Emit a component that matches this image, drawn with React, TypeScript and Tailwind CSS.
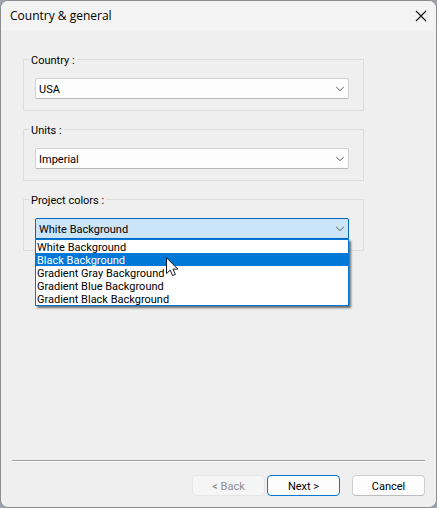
import { useState } from 'react'
import type { ReactNode } from 'react'
import clsx from 'clsx'

const colorOptions = [
  'White Background',
  'Black Background',
  'Gradient Gray Background',
  'Gradient Blue Background',
  'Gradient Black Background',
]

type ComboProps = {
  id: string
  value: string
  options: string[]
  open?: boolean
  onChange: (value: string) => void
}

function Combo({ id, value, options, open, onChange }: ComboProps) {
  return (
    <div className="relative flex">
      <select
        id={id}
        value={value}
        onChange={(e) => onChange(e.target.value)}
        className={clsx(
          'h-[21px] w-full appearance-none border pl-[3px] pr-6 pt-[3px] outline-none',
          open
            ? 'rounded-t-[2px] border-[#0067c0] bg-[#cce4f7]'
            : 'rounded-[2px] border-[#d0d0d0] border-b-[#b8b8b8] bg-[#fdfdfd]'
        )}
      >
        {options.map((option) => (
          <option key={option}>{option}</option>
        ))}
      </select>
      <svg
        className="pointer-events-none absolute right-1 top-2 h-[6px] w-[10px]"
        viewBox="0 0 10 6"
        fill="none"
        stroke="#5c5c5c"
      >
        <path d="M1.2 1L5 4.6L8.8 1" />
      </svg>
    </div>
  )
}

function Group({ id, title, children }: { id: string; title: string; children: ReactNode }) {
  return (
    <fieldset className="relative min-w-0 border border-[#dcdcdc] pb-[11px] pl-[11px] pr-[14px]">
      <legend className="-ml-[6px] mb-[11px] h-[15px] px-[2px] leading-[17px]">
        <label htmlFor={id}>{title}</label>
      </legend>
      {children}
    </fieldset>
  )
}

function Cursor() {
  return (
    <svg className="pointer-events-none absolute left-[131px] top-[18px] h-[20px] w-[13px]" viewBox="0 0 13 20">
      <path
        d="M.5 .7V16.6L4.2 13.1L6.6 18.6L9.4 17.4L7 12.1H11.8Z"
        fill="#fff"
        stroke="#111827"
        strokeWidth="1"
      />
    </svg>
  )
}

const buttonClass = 'h-[21px] w-[73px] rounded-[4px] border pt-px text-center leading-[19px]'

export default function App() {
  const [country, setCountry] = useState('USA')
  const [units, setUnits] = useState('Imperial')
  const [color, setColor] = useState('White Background')
  const [active, setActive] = useState('Black Background')

  return (
    <div className="flex min-h-screen bg-[#9da3ad] font-['Roboto',sans-serif] text-[11px] text-black">
      <div className="flex flex-1 flex-col overflow-hidden rounded-[8px] border border-[#8b8b90] bg-[#efefef]">
        <header className="flex h-[30px] items-center justify-between bg-[#f3f3f3] pl-[9px] pr-[9px]">
          <h1 className="font-['Open_Sans',sans-serif] text-[12px] leading-4">Country &amp; general</h1>
          <button type="button" aria-label="Close">
            <svg className="h-3 w-3" viewBox="0 0 12 12" stroke="#111" strokeWidth="1.1">
              <path d="M1 1L11 11M11 1L1 11" />
            </svg>
          </button>
        </header>

        <main className="flex flex-1 flex-col gap-[11px] pl-[22px] pr-[72px] pt-[21px]">
          <Group id="country" title="Country :">
            <Combo id="country" value={country} options={['USA', 'Canada']} onChange={setCountry} />
          </Group>
          <Group id="units" title="Units :">
            <Combo id="units" value={units} options={['Imperial', 'Metric']} onChange={setUnits} />
          </Group>
          <Group id="colors" title="Project colors :">
            <div className="relative">
              <Combo id="colors" value={color} options={colorOptions} open onChange={setColor} />
              <div className="absolute inset-x-0 top-full">
                <ul
                  role="listbox"
                  aria-label="Project colors"
                  className="border border-[#0078d7] bg-white shadow-[2px_2px_2px_rgba(0,0,0,0.55)]"
                >
                  {colorOptions.map((option) => (
                    <li
                      key={option}
                      role="option"
                      aria-selected={option === active}
                      onMouseEnter={() => setActive(option)}
                      onClick={() => setColor(option)}
                      className={clsx(
                        'h-[13px] pl-px leading-[15px]',
                        option === active && 'bg-[#0078d7] text-white'
                      )}
                    >
                      {option}
                    </li>
                  ))}
                </ul>
                <Cursor />
              </div>
            </div>
          </Group>
        </main>

        <footer className="px-[11px] pb-[11px]">
          <div className="border-t border-[#a0a0a0] border-b border-b-white" />
          <div className="flex justify-end pt-[13px]">
            <button type="button" disabled className={clsx(buttonClass, 'mr-[2px] border-[#e6e6e6] bg-[#f5f5f5] text-[#8d8d8d]')}>
              &lt; Back
            </button>
            <button type="button" className={clsx(buttonClass, 'mr-3 border-[#0078d4] bg-[#fdfdfd]')}>
              Next &gt;
            </button>
            <button type="button" className={clsx(buttonClass, 'border-[#d0d0d0] border-b-[#bcbcbc] bg-[#fdfdfd]')}>
              Cancel
            </button>
          </div>
        </footer>
      </div>
    </div>
  )
}
